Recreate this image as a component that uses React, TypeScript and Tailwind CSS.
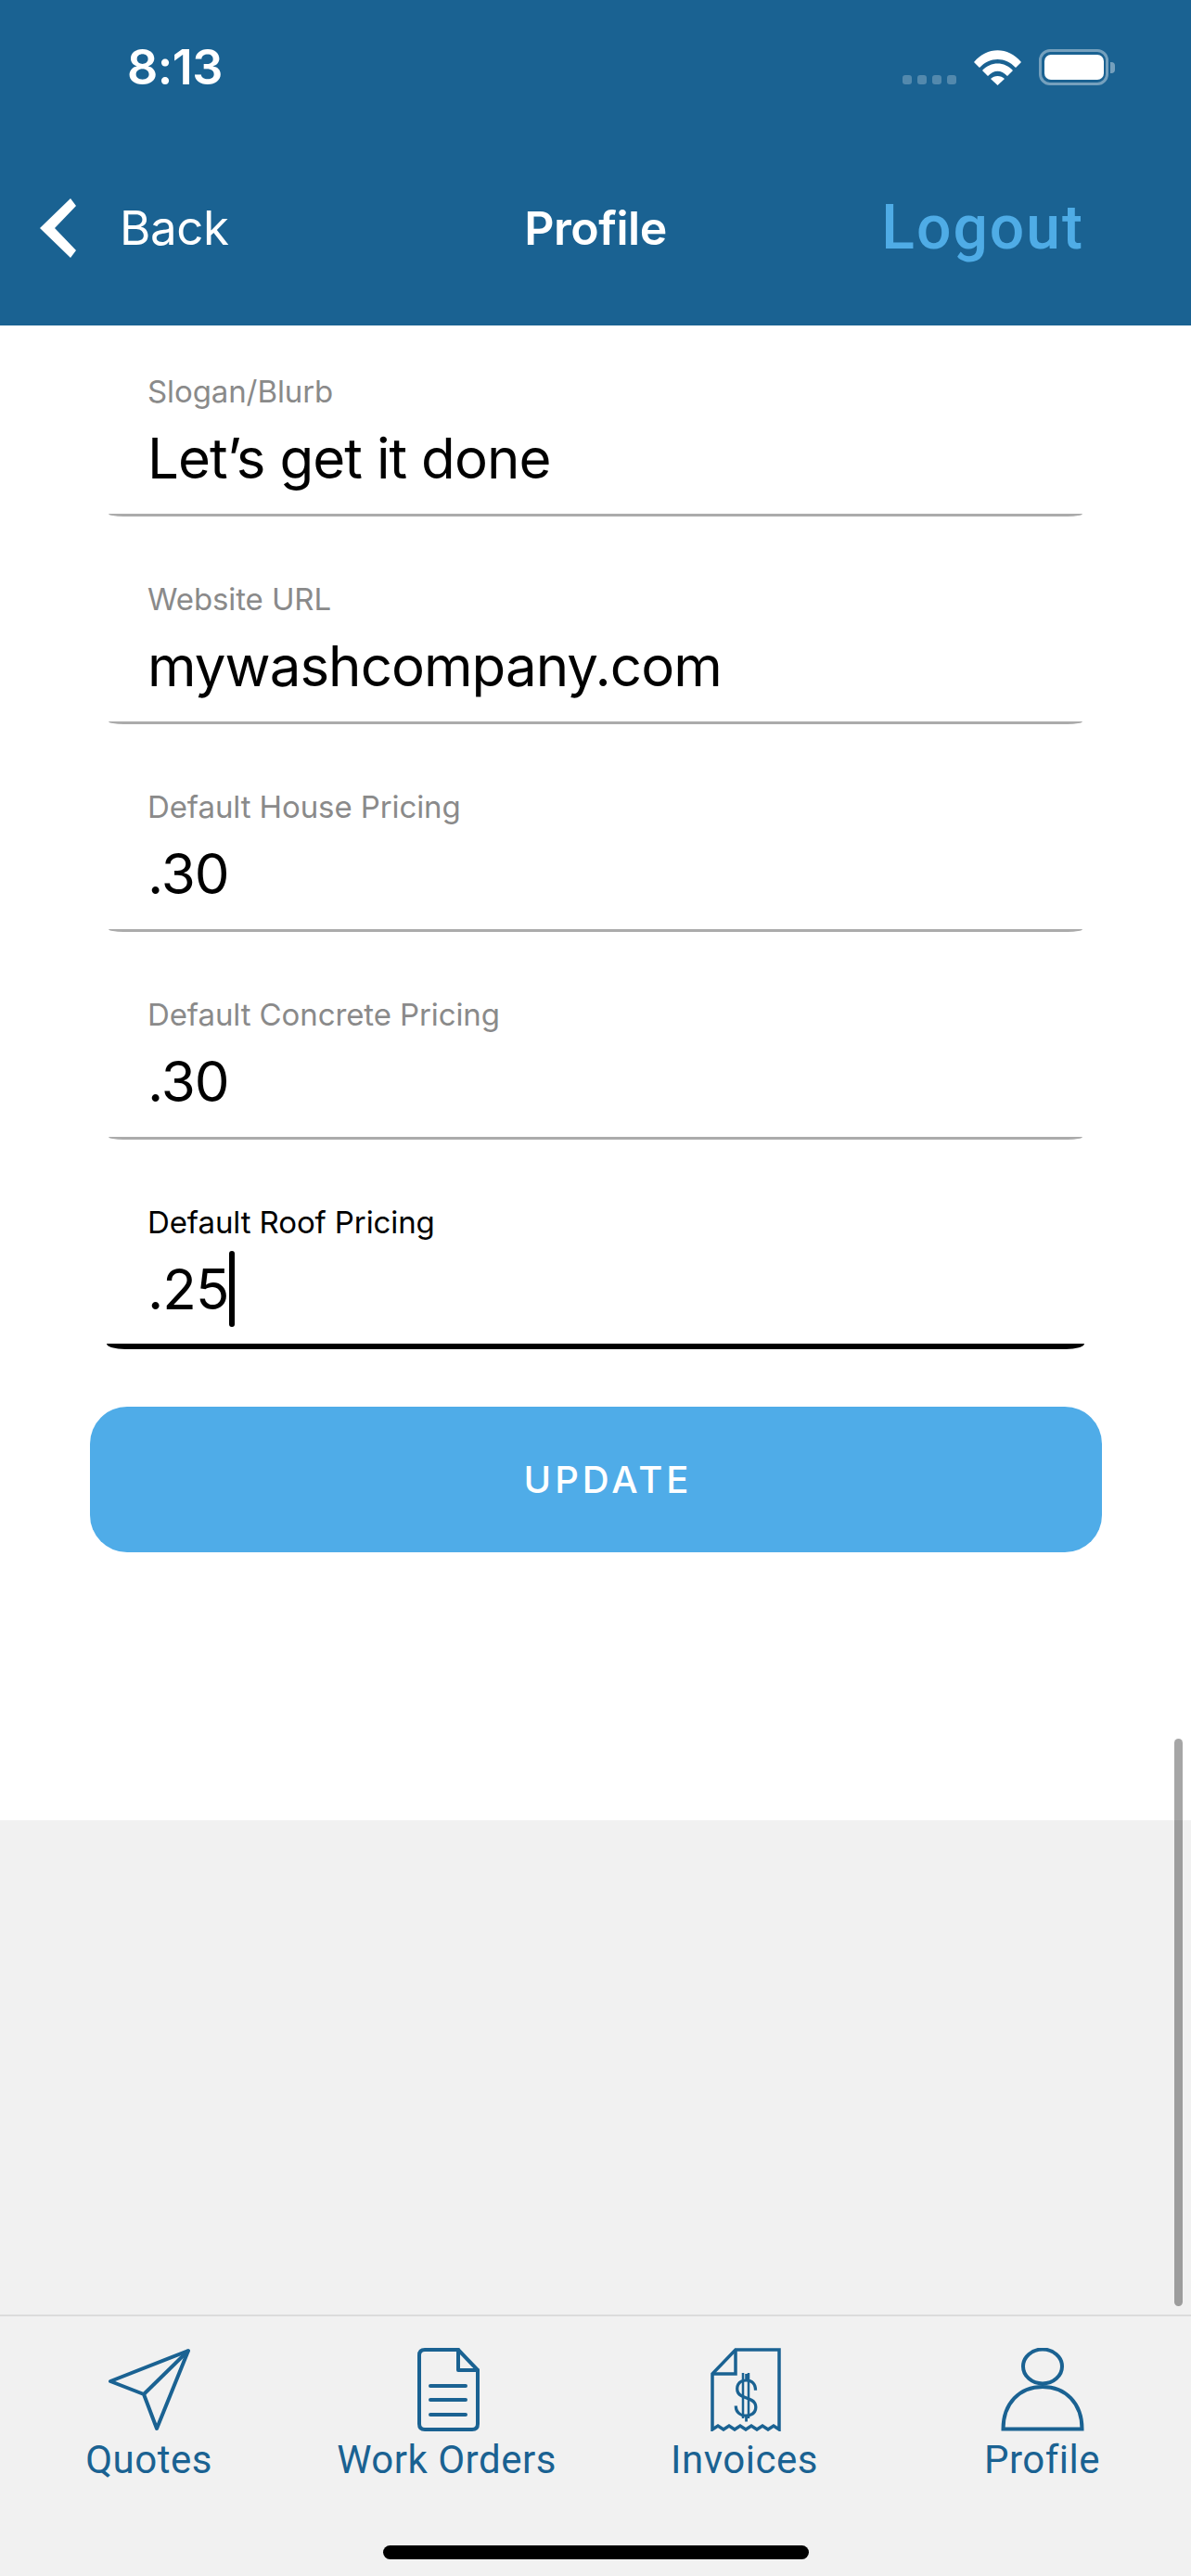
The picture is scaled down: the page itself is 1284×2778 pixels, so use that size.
import React from 'react';

const FIELDS = [
  { label: 'Slogan/Blurb', value: 'Let’s get it done' },
  { label: 'Website URL', value: 'mywashcompany.com' },
  { label: 'Default House Pricing', value: '.30' },
  { label: 'Default Concrete Pricing', value: '.30' },
  { label: 'Default Roof Pricing', value: '.25', active: true },
];

const PlaneIcon = () => (
  <svg width="90" height="90" viewBox="0 0 90 90" fill="none" stroke="#1A6292" strokeWidth="4" strokeLinejoin="round">
    <path d="M87 3 L3 36 L39 50 L53 87 Z" />
    <path d="M87 3 L39 50" />
  </svg>
);

const DocIcon = () => (
  <svg className="ml-[3px]" width="67" height="90" viewBox="0 0 67 90" fill="none" stroke="#1A6292" strokeWidth="4" strokeLinejoin="round" strokeLinecap="round">
    <path d="M8 2 H44 L65 24 V82 Q65 88 59 88 H8 Q2 88 2 82 V8 Q2 2 8 2 Z" />
    <path d="M44 2 V24 H65" />
    <path d="M14 41 H52 M14 56 H52 M14 72 H52" />
  </svg>
);

const InvoiceIcon = () => (
  <svg className="ml-[2px]" width="76" height="90" viewBox="0 0 76 90" fill="none" stroke="#1A6292" strokeWidth="3.5">
    <path d="M2 28 L27 2 H74 V88 L68 84 L62 88 L56 84 L50 88 L44 84 L38 88 L32 84 L26 88 L20 84 L14 88 L8 84 L2 88 Z" />
    <path d="M27 2 V28 H2" />
    <text x="38" y="74" textAnchor="middle" fontFamily="Roboto, sans-serif" fontSize="56" fontWeight="300" fill="#1A6292" stroke="none">$</text>
    <path d="M35 27 V76 M41 27 V76" strokeWidth="2.5" />
  </svg>
);

const PersonIcon = () => (
  <svg width="90" height="90" viewBox="0 0 90 90" fill="none" stroke="#1A6292" strokeWidth="4">
    <ellipse cx="45" cy="20" rx="21" ry="18.5" />
    <path d="M2.5 87.5 C2.5 60 20 42 45 42 C70 42 87.5 60 87.5 87.5 Z" />
  </svg>
);

const TABS = [
  { label: 'Quotes', icon: <PlaneIcon /> },
  { label: 'Work Orders', icon: <DocIcon /> },
  { label: 'Invoices', icon: <InvoiceIcon /> },
  { label: 'Profile', icon: <PersonIcon /> },
];

const App: React.FC = () => {
  return (
    <div className="relative flex h-[2778px] w-[1284px] flex-col overflow-hidden bg-[#F1F1F1] font-['Inter',sans-serif]">
      {/* Header */}
      <header className="h-[351px] shrink-0 bg-[#1A6292] text-white">
        <div className="flex h-[214px] items-start justify-between pl-[137px] pr-[82px] pt-[53px]">
          <span className="text-[52px] font-semibold leading-[40px] tracking-[-0.5px]">8:13</span>
          <div className="flex items-end">
            <div className="mb-px flex gap-[6px]">
              <div className="h-[10px] w-[10px] rounded-[3px] bg-white/25"></div>
              <div className="h-[10px] w-[10px] rounded-[3px] bg-white/25"></div>
              <div className="h-[10px] w-[10px] rounded-[3px] bg-white/25"></div>
              <div className="h-[10px] w-[10px] rounded-[3px] bg-white/25"></div>
            </div>
            <svg className="ml-[19px]" width="51" height="38" viewBox="0 0 51 38" fill="white">
              <path d="M0 13 C14 -4 37 -4 51 13 L45 19 C34 7 17 7 6 19 Z" />
              <path d="M9 22 C18 12 33 12 42 22 L36 28 C29 21 22 21 15 28 Z" />
              <path d="M18 31 C22 27 29 27 33 31 L25.5 38 Z" />
            </svg>
            <div className="ml-[19px] flex items-center">
              <div className="flex h-[39px] w-[75px] items-center justify-center rounded-[12px] border-[3px] border-white/40">
                <div className="h-[27px] w-[64px] rounded-[7px] bg-white"></div>
              </div>
              <div className="ml-[2px] h-[12px] w-[5px] rounded-r-[4px] bg-white/40"></div>
            </div>
          </div>
        </div>
        <nav className="grid grid-cols-3 items-center">
          <div className="flex items-center pl-[43px]">
            <svg width="39" height="64" viewBox="0 0 39 64" fill="white">
              <path d="M33 0 L39 8 L16 32 L39 56 L33 64 L0 32 Z" />
            </svg>
            <span className="ml-[47px] text-[51px] leading-[64px] tracking-[-0.4px]">Back</span>
          </div>
          <div className="text-center text-[50px] font-semibold leading-[64px] tracking-[-0.5px]">Profile</div>
          <div className="pr-[115px] text-right font-['Roboto',sans-serif] text-[66px] font-medium leading-[64px] tracking-[2px] text-[#4FACE6]">
            Logout
          </div>
        </nav>
      </header>

      {/* Form */}
      <main className="h-[1612px] shrink-0 overflow-hidden bg-white">
        <div className="-mt-[16px]">
          {FIELDS.map((f) => (
            <div key={f.label} className="mx-[117px] flex h-[224px] flex-col justify-end">
              <div className={`pl-[42px] text-[33px] leading-[40px] tracking-[-0.1px] ${f.active ? 'text-black' : 'text-[#8A8A8A]'}`}>
                {f.label}
              </div>
              <div className="mt-[10px] flex h-[84px] items-center pl-[42px] text-[60px] leading-[84px] tracking-[-0.95px] text-black">
                {f.value}
                {f.active && <div className="h-[82px] w-[6px] rounded-full bg-black"></div>}
              </div>
              {f.active ? (
                <div className="-mx-[2px] mt-[17px] h-[6px] rounded-b-[20px_6px] bg-black"></div>
              ) : (
                <div className="mt-[18px] mb-[2px] h-[3px] rounded-b-[16px_3px] bg-[#ABABAB]"></div>
              )}
            </div>
          ))}
        </div>
        <button className="mx-[97px] mt-[62px] flex h-[157px] w-[1091px] items-center justify-center rounded-[40px] bg-[#4FACE8] pl-[26px] text-[40px] font-medium tracking-[4px] text-white">
          UPDATE
        </button>
      </main>

      <div className="flex-1"></div>

      {/* Tab bar */}
      <footer className="h-[282px] shrink-0 border-t-2 border-[#DCDCDC] pt-[34px]">
        <div className="grid grid-cols-4">
          {TABS.map((t) => (
            <div key={t.label} className="flex flex-col items-center">
              {t.icon}
              <span className="mt-[6px] font-['Roboto',sans-serif] text-[42px] leading-[50px] tracking-[0.5px] text-[#1A6292]">
                {t.label}
              </span>
            </div>
          ))}
        </div>
        <div className="mx-auto mt-[67px] h-[15px] w-[459px] rounded-full bg-black"></div>
      </footer>

      {/* Scroll indicator */}
      <div className="absolute left-[1266px] top-[1875px] h-[612px] w-[9px] rounded-full bg-black/35"></div>
    </div>
  );
};

export default App;
